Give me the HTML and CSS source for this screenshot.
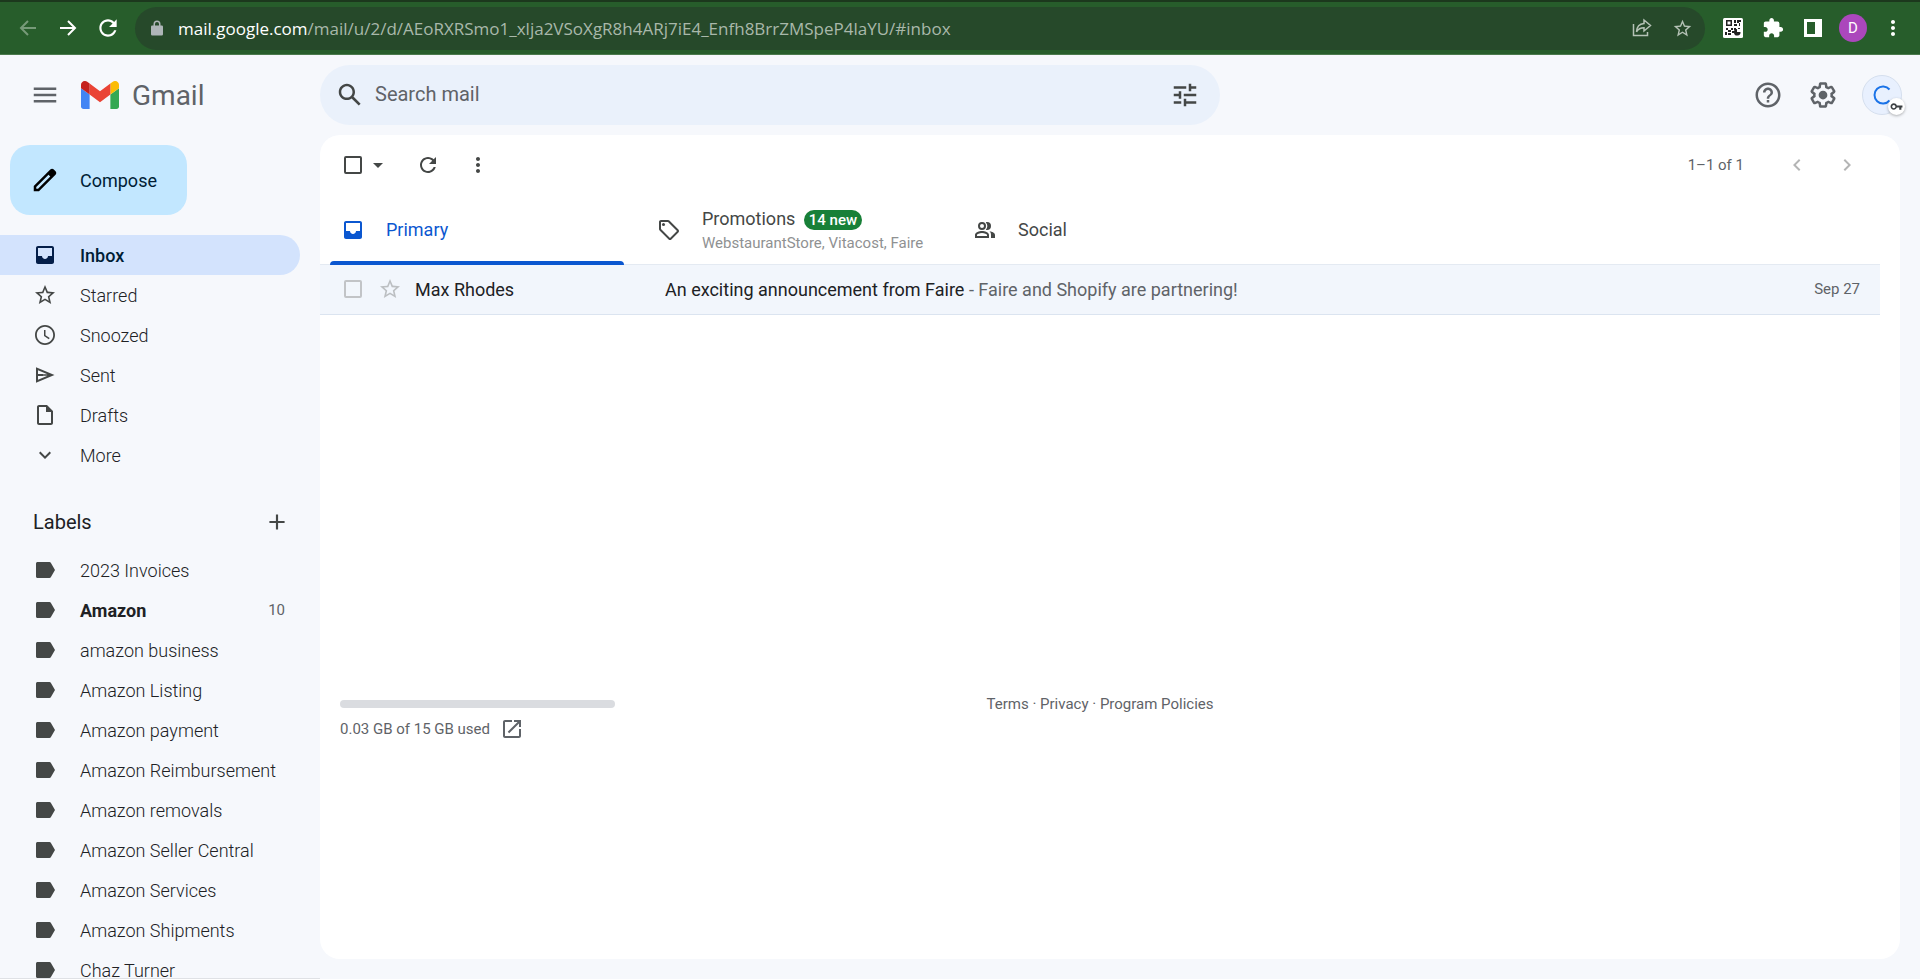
FILE: index.html
```html
<!DOCTYPE html>
<html lang="en">

<head>
  <meta charset="UTF-8">
  <meta name="viewport" content="width=device-width, initial-scale=1">
  <title>Inbox - Gmail</title>
  <link rel="stylesheet" href="styles.css">
</head>

<body>
  <!-- shared icons -->
  <svg class="sprite" aria-hidden="true">
    <symbol id="i-inbox" viewBox="0 0 24 24"><path d="M19 3H5c-1.100 0-2 .9-2 2v14c0 1.100.9 2 2 2h14c1.100 0 2-.9 2-2V5c0-1.100-.9-2-2-2zm0 10h-4c0 1.660-1.350 3-3 3s-3-1.340-3-3H5V5h14v8z"/></symbol>
    <symbol id="i-star" viewBox="0 0 24 24"><path d="M22 9.240l-7.190-.62L12 2 9.190 8.630 2 9.240l5.460 4.730L5.820 21 12 17.270 18.180 21l-1.630-7.030L22 9.240zM12 15.400l-3.760 2.270 1-4.280-3.320-2.880 4.380-.38L12 6.100l1.710 4.040 4.380.38-3.320 2.880 1 4.280L12 15.400z"/></symbol>
    <symbol id="i-label" viewBox="0 0 24 24"><path d="M16.500 4H4.500C3.700 4 3 4.700 3 5.500v13c0 .8.7 1.500 1.500 1.500h12c.6 0 1-.3 1.300-.7L22 12l-4.200-7.300c-.3-.4-.7-.7-1.300-.7z"/></symbol>
    <symbol id="i-refresh" viewBox="0 0 24 24"><path d="M17.650 6.350C16.200 4.900 14.210 4 12 4c-4.420 0-7.990 3.580-7.990 8s3.570 8 7.990 8c3.730 0 6.840-2.550 7.730-6h-2.080c-.82 2.330-3.040 4-5.650 4-3.310 0-6-2.690-6-6s2.690-6 6-6c1.660 0 3.140.69 4.220 1.780L13 11h7V4l-2.350 2.350z"/></symbol>
    <symbol id="i-dots" viewBox="0 0 24 24"><path d="M12 8c1.100 0 2-.9 2-2s-.9-2-2-2-2 .9-2 2 .9 2 2 2zm0 2c-1.100 0-2 .9-2 2s.9 2 2 2 2-.9 2-2-.9-2-2-2zm0 6c-1.100 0-2 .9-2 2s.9 2 2 2 2-.9 2-2-.9-2-2-2z"/></symbol>
  </svg>

  <div class="browser-bar">
    <button class="icon-btn faded" aria-label="Back"><svg width="20" height="20" viewBox="0 0 20 20"><path class="line" d="M18 10H3M10 3l-7 7 7 7"/></svg></button>
    <button class="icon-btn" aria-label="Forward"><svg width="20" height="20" viewBox="0 0 20 20"><path class="line" d="M2 10h15M10 3l7 7-7 7"/></svg></button>
    <button class="icon-btn" aria-label="Reload"><svg width="26" height="26"><use href="#i-refresh"/></svg></button>
    <div class="address-bar">
      <svg class="lock" width="12" height="16" viewBox="0 0 12 16"><path d="M1.500 5.500H2.500V4a3.500 3.500 0 0 1 7 0v1.500h1A1.300 1.300 0 0 1 12 6.800v7.400a1.300 1.300 0 0 1-1.300 1.300H1.300A1.300 1.300 0 0 1 0 14.200V6.800A1.300 1.300 0 0 1 1.500 5.500zM4 5.500h4V4a2 2 0 0 0-4 0z"/></svg>
      <div class="url"><span>mail.google.com</span>/mail/u/2/d/AEoRXRSmo1_xlja2VSoXgR8h4ARj7iE4_Enfh8BrrZMSpeP4laYU/#inbox</div>
      <button class="icon-btn" aria-label="Share"><svg width="20" height="20" viewBox="0 0 20 20"><path class="thin" d="M1.500 6v11.500h14V14M12 2l6.500 5.500L12 13v-3.200c-3.500 0-5.800 1.200-7.500 4 .3-4.700 3-8 7.500-8.300z"/></svg></button>
      <button class="icon-btn" aria-label="Bookmark"><svg width="21" height="21"><use href="#i-star"/></svg></button>
    </div>
    <button class="icon-btn" aria-label="QR code">
      <svg width="20" height="20" viewBox="0 0 20 20"><rect width="20" height="20" rx="1.500"/><g class="qr"><path d="M3 2h6v6H3zM4.500 3.500v3h3v-3zM11 2h2v3h-2zM14 2h4v2h-2v1h-2zM16 5h1v3h-1zM11 6h3v2h-3zM3 10h2v2H3zM5 12h3v2H5zM8 10h2v2H8zM2 14h2v3H2zM5 15h3v2H5zM11 10h2v2h-2zM15 10h2v1h-2zM9 13h2v2H9z" fill-rule="evenodd"/><path d="M14 11v3h3.500a3.300 3.300 0 1 1-3.500-3z"/></g></svg>
    </button>
    <button class="icon-btn" aria-label="Extensions"><svg width="22" height="22" viewBox="0 0 24 24"><path d="M20.500 11H19V7c0-1.100-.9-2-2-2h-4V3.500C13 2.120 11.880 1 10.500 1S8 2.120 8 3.500V5H4c-1.100 0-1.990.9-1.990 2v3.800H3.500c1.490 0 2.700 1.210 2.700 2.700s-1.210 2.700-2.700 2.700H2V20c0 1.100.9 2 2 2h3.800v-1.500c0-1.490 1.210-2.700 2.700-2.700s2.700 1.210 2.700 2.700V22H17c1.100 0 2-.9 2-2v-4h1.500c1.380 0 2.500-1.120 2.500-2.500S21.880 11 20.500 11z"/></svg></button>
    <button class="icon-btn" aria-label="Side panel"><svg width="18" height="18" viewBox="0 0 18 18"><path d="M0 0h18v18H0zM3 3v12h8V3z" fill-rule="evenodd"/></svg></button>
    <button class="profile" aria-label="Profile">D</button>
    <button class="icon-btn" aria-label="Browser menu"><svg width="24" height="24"><use href="#i-dots"/></svg></button>
  </div>

  <header class="header">
    <div class="brand">
      <button class="icon-btn" aria-label="Main menu"><svg width="30" height="30" viewBox="0 0 24 24"><path d="M3 18h18v-2H3v2zm0-5h18v-2H3v2zm0-7v2h18V6H3z"/></svg></button>
      <a class="logo" href="#">
        <svg width="38" height="28" viewBox="52 42 88 66" preserveAspectRatio="none">
          <path fill="#4285f4" d="M58 108h14V74L52 59v43c0 3.320 2.690 6 6 6"/>
          <path fill="#34a853" d="M120 108h14c3.320 0 6-2.690 6-6V59l-20 15"/>
          <path fill="#fbbc04" d="M120 48v26l20-15v-8c0-7.420-8.470-11.650-14.400-7.200"/>
          <path fill="#ea4335" d="M72 74V48l24 18 24-18v26L96 92"/>
          <path fill="#c5221f" d="M52 51v8l20 15V48l-5.600-4.200c-5.940-4.450-14.400-.22-14.400 7.200"/>
        </svg>
        <span>Gmail</span>
      </a>
    </div>
    <form class="search">
      <button type="button" class="icon-btn" aria-label="Search"><svg width="30" height="30" viewBox="0 0 24 24"><path d="M20.490 19l-5.730-5.730C15.530 12.200 16 10.910 16 9.500 16 5.910 13.090 3 9.500 3S3 5.910 3 9.500 5.910 16 9.500 16c1.410 0 2.700-.47 3.770-1.240L19 20.490 20.490 19zM5 9.500C5 7.010 7.010 5 9.500 5S14 7.010 14 9.500 11.990 14 9.500 14 5 11.990 5 9.500z"/></svg></button>
      <input type="text" placeholder="Search mail" aria-label="Search mail">
      <button type="button" class="icon-btn" aria-label="Search options"><svg width="30" height="30" viewBox="0 0 24 24"><path d="M3 17v2h6v-2H3zM3 5v2h10V5H3zm10 16v-2h8v-2h-8v-2h-2v6h2zM7 9v2H3v2h4v2h2V9H7zm14 4v-2H11v2h10zm-6-4h2V7h4V5h-4V3h-2v6z"/></svg></button>
    </form>
    <div class="header-tools">
      <button class="icon-btn" aria-label="Support"><svg width="30" height="30" viewBox="0 0 24 24"><path d="M11 18h2v-2h-2v2zm1-16C6.480 2 2 6.480 2 12s4.480 10 10 10 10-4.480 10-10S17.520 2 12 2zm0 18c-4.410 0-8-3.590-8-8s3.590-8 8-8 8 3.590 8 8-3.590 8-8 8zm0-14c-2.210 0-4 1.790-4 4h2c0-1.100.9-2 2-2s2 .9 2 2c0 2-3 1.750-3 5h2c0-2.250 3-2.500 3-5 0-2.210-1.790-4-4-4z"/></svg></button>
      <button class="icon-btn" aria-label="Settings"><svg width="30" height="30" viewBox="0 0 24 24"><path d="M13.850 22.250h-3.700c-.74 0-1.360-.54-1.450-1.270l-.27-1.890c-.27-.14-.53-.29-.79-.46l-1.800.72c-.7.26-1.470-.03-1.810-.65L2.200 15.530c-.35-.66-.2-1.440.36-1.880l1.530-1.190c-.01-.15-.02-.3-.02-.46 0-.15.01-.31.02-.46l-1.520-1.190c-.59-.45-.74-1.260-.37-1.880l1.850-3.190c.34-.62 1.110-.9 1.790-.63l1.810.73c.26-.17.52-.32.78-.46l.27-1.910c.09-.7.710-1.250 1.440-1.250h3.700c.74 0 1.360.54 1.450 1.270l.27 1.890c.27.14.53.29.79.46l1.800-.72c.71-.26 1.480.03 1.820.65l1.840 3.180c.36.66.2 1.440-.36 1.880l-1.520 1.190c.01.15.02.3.02.46s-.01.31-.02.46l1.520 1.190c.56.45.72 1.230.37 1.860l-1.860 3.220c-.34.62-1.110.9-1.800.63l-1.800-.72c-.26.17-.52.32-.78.46l-.27 1.910c-.1.680-.72 1.220-1.460 1.220zm-3.230-2h2.760l.37-2.550.53-.22c.44-.18.88-.44 1.340-.78l.45-.34 2.380.96 1.380-2.400-2.030-1.580.07-.56c.03-.26.06-.51.06-.78s-.03-.53-.06-.78l-.07-.56 2.030-1.580-1.390-2.400-2.390.96-.45-.35c-.42-.32-.87-.58-1.330-.77l-.52-.22-.37-2.550h-2.760l-.37 2.550-.53.21c-.44.190-.88.440-1.340.790l-.45.330-2.380-.95-1.390 2.390 2.030 1.580-.07.560a7 7 0 0 0-.06.790c0 .260.020.530.060.780l.07.560-2.030 1.580 1.380 2.400 2.390-.96.450.35c.430.330.860.580 1.330.77l.53.22.38 2.550z"/><circle cx="12" cy="12" r="3.500"/></svg></button>
      <button class="avatar" aria-label="Account"><svg width="18" height="20" viewBox="0 0 18 20"><path d="M16.500 4.500A8.500 8.500 0 1 0 16.500 15.500"/></svg>
        <span class="key"><svg width="13" height="13" viewBox="0 0 24 24"><path d="M12.650 10C11.830 7.670 9.610 6 7 6c-3.310 0-6 2.690-6 6s2.690 6 6 6c2.610 0 4.830-1.670 5.650-4H17v4h4v-4h2v-4H12.650zM7 15c-1.650 0-3-1.350-3-3s1.350-3 3-3 3 1.350 3 3-1.350 3-3 3z"/></svg></span>
      </button>
    </div>
  </header>

  <div class="content">
    <nav class="sidebar">
      <button class="compose"><svg width="30" height="30" viewBox="0 0 24 24"><path d="M20.410 4.940l-1.350-1.350c-.78-.78-2.050-.78-2.830 0L3 16.820V21h4.180L20.410 7.770c.79-.78.790-2.050 0-2.830zM6.410 19.060L5 19v-1.360l9.820-9.820 1.410 1.410-9.820 9.830z"/></svg>Compose</button>

      <ul class="folders">
        <li class="active"><a href="#"><svg width="24" height="24"><use href="#i-inbox"/></svg>Inbox</a></li>
        <li><a href="#"><svg width="24" height="24"><use href="#i-star"/></svg>Starred</a></li>
        <li><a href="#"><svg width="24" height="24" viewBox="0 0 24 24"><path d="M11.990 2C6.470 2 2 6.480 2 12s4.470 10 9.990 10C17.520 22 22 17.520 22 12S17.520 2 11.990 2zM12 20.200c-4.530 0-8.200-3.670-8.200-8.200S7.470 3.800 12 3.800s8.200 3.670 8.200 8.200-3.670 8.200-8.200 8.200zM12.500 7H11v6l4.800 3.200.9-1.300-4.200-2.700z"/></svg>Snoozed</a></li>
        <li><a href="#"><svg width="24" height="24" viewBox="0 0 24 24"><path d="M3 4.200v15.600L21.500 12zm2 3l9.500 4H5zm0 5.600h9.500L5 16.800z" fill-rule="evenodd"/><path d="M5 11h5v2H5z"/></svg>Sent</a></li>
        <li><a href="#"><svg width="24" height="24" viewBox="0 0 24 24"><path d="M14 2H6c-1.100 0-2 .9-2 2v16c0 1.100.9 2 2 2h12c1.100 0 2-.9 2-2V8l-6-6zM6 20V4h7v5h5v11H6z"/></svg>Drafts</a></li>
        <li><a href="#"><svg width="24" height="24" viewBox="0 0 24 24"><path d="M16.590 8.590L12 13.170 7.410 8.590 6 10l6 6 6-6z"/></svg>More</a></li>
      </ul>

      <div class="labels-header">
        <h2>Labels</h2>
        <button class="icon-btn" aria-label="Create new label"><svg width="26" height="26" viewBox="0 0 24 24"><path d="M19 13h-6v6h-2v-6H5v-2h6V5h2v6h6z"/></svg></button>
      </div>

      <ul class="labels">
        <li><a href="#"><svg width="24" height="24"><use href="#i-label"/></svg>2023 Invoices</a></li>
        <li class="unread"><a href="#"><svg width="24" height="24"><use href="#i-label"/></svg>Amazon<span class="count">10</span></a></li>
        <li><a href="#"><svg width="24" height="24"><use href="#i-label"/></svg>amazon business</a></li>
        <li><a href="#"><svg width="24" height="24"><use href="#i-label"/></svg>Amazon Listing</a></li>
        <li><a href="#"><svg width="24" height="24"><use href="#i-label"/></svg>Amazon payment</a></li>
        <li><a href="#"><svg width="24" height="24"><use href="#i-label"/></svg>Amazon Reimbursement</a></li>
        <li><a href="#"><svg width="24" height="24"><use href="#i-label"/></svg>Amazon removals</a></li>
        <li><a href="#"><svg width="24" height="24"><use href="#i-label"/></svg>Amazon Seller Central</a></li>
        <li><a href="#"><svg width="24" height="24"><use href="#i-label"/></svg>Amazon Services</a></li>
        <li><a href="#"><svg width="24" height="24"><use href="#i-label"/></svg>Amazon Shipments</a></li>
        <li><a href="#"><svg width="24" height="24"><use href="#i-label"/></svg>Chaz Turner</a></li>
      </ul>
    </nav>

    <main class="mail">
      <div class="toolbar">
        <input type="checkbox" aria-label="Select all">
        <button class="icon-btn caret" aria-label="Select"><svg width="24" height="24" viewBox="0 0 24 24"><path d="M7 10l5 5 5-5z"/></svg></button>
        <button class="icon-btn" aria-label="Refresh"><svg width="24" height="24"><use href="#i-refresh"/></svg></button>
        <button class="icon-btn" aria-label="More"><svg width="24" height="24"><use href="#i-dots"/></svg></button>
        <span class="range">1–1 of 1</span>
        <button class="icon-btn pale" aria-label="Newer"><svg width="24" height="24" viewBox="0 0 24 24"><path d="M15.400 7.400L14 6l-6 6 6 6 1.400-1.400L10.800 12z"/></svg></button>
        <button class="icon-btn pale" aria-label="Older"><svg width="24" height="24" viewBox="0 0 24 24"><path d="M10 6L8.600 7.400l4.600 4.600-4.600 4.600L10 18l6-6z"/></svg></button>
      </div>

      <div class="tabs">
        <button class="tab selected"><svg width="24" height="24"><use href="#i-inbox"/></svg><span class="tab-name">Primary</span></button>
        <button class="tab"><svg width="24" height="24" viewBox="0 0 24 24"><path d="M21.400 11.600l-9-9C12.100 2.200 11.600 2 11 2H4c-1.100 0-2 .9-2 2v7c0 .6.2 1.100.6 1.400l9 9c.4.400.9.600 1.400.600s1-.2 1.400-.6l7-7c.4-.4.600-.9.600-1.400s-.2-1-.6-1.400zM13 20l-9-9V4h7l9 9-7 7z"/><circle cx="6.500" cy="6.500" r="1.500"/></svg>
          <span class="tab-text">
            <span class="tab-name">Promotions <span class="badge">14 new</span></span>
            <span class="senders">WebstaurantStore, Vitacost, Faire</span>
          </span>
        </button>
        <button class="tab"><svg width="24" height="24" viewBox="0 0 24 24"><path d="M9 4a4 4 0 1 0 0 8 4 4 0 0 0 0-8zm0 2a2 2 0 1 1 0 4 2 2 0 0 1 0-4zM9 13c-2.700 0-7 1.300-7 4v3h14v-3c0-2.700-4.300-4-7-4zm-5 5v-1c0-.8 2.500-2 5-2s5 1.200 5 2v1zM14 4c-.4 0-.8.1-1.200.2a6 6 0 0 1 0 7.600c.4.100.8.200 1.200.200a4 4 0 0 0 0-8zM16.500 13.300c1 .9 1.500 2.100 1.500 3.700v3h4v-3c0-2-2.700-3.300-5.500-3.700z"/></svg><span class="tab-name">Social</span></button>
      </div>

      <table class="messages">
        <tr>
          <td class="col-check"><input type="checkbox" aria-label="Select message"></td>
          <td class="col-star"><button class="icon-btn" aria-label="Star"><svg width="24" height="24"><use href="#i-star"/></svg></button></td>
          <td class="col-from">Max Rhodes</td>
          <td><a href="#">An exciting announcement from Faire<span> - Faire and Shopify are partnering!</span></a></td>
          <td class="col-date">Sep 27</td>
        </tr>
      </table>

      <footer class="footer">
        <div class="storage">
          <div class="storage-bar"></div>
          <div class="storage-text">0.03 GB of 15 GB used
            <a href="#" aria-label="Manage storage"><svg width="24" height="24" viewBox="0 0 24 24"><path d="M19 19H5V5h7V3H5c-1.100 0-2 .9-2 2v14c0 1.100.9 2 2 2h14c1.100 0 2-.9 2-2v-7h-2v7zM14 3v2h3.590l-9.830 9.830 1.410 1.410L19 6.410V10h2V3h-7z"/></svg></a>
          </div>
        </div>
        <div class="links"><a href="#">Terms</a> · <a href="#">Privacy</a> · <a href="#">Program Policies</a></div>
      </footer>
    </main>
  </div>
</body>

</html>
```
FILE: styles.css
```css
* {
  box-sizing: border-box;
}

body {
  display: flex;
  flex-direction: column;
  height: 100vh;
  margin: 0;
  overflow: hidden;
  background-color: #f6f8fc;
  color: #202124;
  font-family: Roboto, Arial, sans-serif;
  font-size: 18px;
}

button,
input {
  font-family: inherit;
  font-size: inherit;
  color: inherit;
}

button {
  padding: 0;
  border: none;
  background: none;
  cursor: pointer;
}

a {
  color: inherit;
  text-decoration: none;
}

ul {
  list-style-type: none;
  margin: 0;
  padding: 0;
}

svg {
  fill: currentColor;
  flex-shrink: 0;
}

.sprite {
  position: absolute;
  width: 0;
  height: 0;
}

.icon-btn {
  display: flex;
  align-items: center;
  justify-content: center;
  width: 40px;
  height: 40px;
  flex-shrink: 0;
}

input[type="checkbox"] {
  appearance: none;
  display: block;
  width: 18px;
  height: 18px;
  margin: 0;
  border: 2px solid #444746;
  border-radius: 2px;
}

/* browser bar */
.browser-bar {
  display: flex;
  align-items: center;
  height: 55px;
  flex-shrink: 0;
  padding: 0 7px 0 8px;
  border-top: 2px solid #1c381d;
  border-bottom: 1px solid #4b7a4d;
  background-color: #275d2b;
  color: #fff;
}

.browser-bar .faded {
  color: #779a79;
}

.line,
.thin {
  fill: none;
  stroke: currentColor;
  stroke-width: 2;
}

.thin {
  stroke-width: 1.5;
}

.address-bar {
  display: flex;
  align-items: center;
  flex: 1;
  min-width: 0;
  height: 43px;
  margin: 0 8px 0 7px;
  padding: 0 3px 0 16px;
  border-radius: 22px;
  background-color: #26492a;
  color: #b5c2b6;
}

.lock {
  color: #aeb5b8;
}

.url {
  flex: 1;
  min-width: 0;
  margin-left: 15px;
  overflow: hidden;
  white-space: nowrap;
  font-family: "Open Sans", sans-serif;
  font-size: 17px;
  color: #a9b8aa;
}

.url span {
  color: #fff;
}

.qr {
  fill: #222;
}

.profile {
  width: 28px;
  height: 28px;
  margin: 0 6px;
  border-radius: 50%;
  background-color: #ab47bc;
  font-size: 15px;
}

/* header */
.header {
  display: flex;
  align-items: center;
  height: 80px;
  flex-shrink: 0;
  color: #5f6368;
}

.brand {
  display: flex;
  align-items: center;
  width: 320px;
  flex-shrink: 0;
  padding-left: 25px;
}

.logo {
  display: flex;
  align-items: center;
  gap: 13px;
  margin-left: 16px;
  font-size: 28px;
}

.search {
  display: flex;
  align-items: center;
  flex: 0 1 900px;
  height: 60px;
  padding: 0 15px 0 10px;
  border-radius: 30px;
  background-color: #eaf1fb;
  color: #444746;
}

.search input {
  flex: 1;
  min-width: 0;
  padding: 0 5px 2px;
  border: none;
  outline: none;
  background: none;
  font-size: 20px;
}

.search input::placeholder {
  color: #5f6368;
  opacity: 1;
}

.header-tools {
  display: flex;
  align-items: center;
  gap: 15px;
  margin-left: auto;
  padding-right: 18px;
}

.avatar {
  position: relative;
  display: flex;
  align-items: center;
  justify-content: center;
  width: 40px;
  height: 40px;
  margin-left: 4px;
  border: 1px solid #d5dfee;
  border-radius: 50%;
  background-color: #e8f0fe;
}

.avatar > svg {
  fill: none;
  stroke: #1a73e8;
  stroke-width: 2;
}

.key {
  position: absolute;
  right: -4px;
  bottom: -1px;
  display: flex;
  align-items: center;
  justify-content: center;
  width: 17px;
  height: 17px;
  border-radius: 50%;
  background-color: #fff;
  box-shadow: 0 1px 3px rgba(0, 0, 0, 0.3);
  color: #3c4043;
}

/* sidebar */
.content {
  display: flex;
  flex: 1;
  min-height: 0;
}

.sidebar {
  width: 320px;
  flex-shrink: 0;
  overflow: hidden;
  padding-top: 10px;
  border-bottom: 1px solid #dfe1e5;
  color: #202124;
}

.compose {
  display: flex;
  align-items: center;
  gap: 20px;
  height: 70px;
  margin: 0 0 20px 10px;
  padding: 0 30px 0 20px;
  border-radius: 20px;
  background-color: #c2e7ff;
  color: #001d35;
}

.compose svg {
  color: #000;
}

.folders a,
.labels a {
  display: flex;
  align-items: center;
  gap: 23px;
  height: 40px;
  margin-right: 20px;
  padding: 0 15px 0 33px;
  border-radius: 0 20px 20px 0;
  font-weight: 300;
}

.folders svg,
.labels svg {
  color: #444746;
}

.folders .active a {
  background-color: #d3e3fd;
  color: #001d35;
  font-weight: 500;
}

.folders .active svg {
  color: #041e49;
}

.labels-header {
  display: flex;
  align-items: center;
  justify-content: space-between;
  height: 75px;
  padding: 19px 23px 0 33px;
}

.labels-header h2 {
  margin: 0;
  font-size: 20px;
  font-weight: normal;
}

.labels-header .icon-btn {
  color: #444746;
}

.labels .unread a {
  font-weight: bold;
}

.count {
  margin-left: auto;
  font-size: 15px;
  font-weight: normal;
  color: #5f6368;
}

/* mail list */
.mail {
  flex: 1;
  min-width: 0;
  margin: 0 20px 20px 0;
  overflow: hidden;
  border-radius: 20px;
  background-color: #fff;
}

.toolbar {
  display: flex;
  align-items: center;
  height: 60px;
  padding: 0 28px 0 24px;
  color: #444746;
}

.toolbar .icon-btn {
  width: 50px;
}

.toolbar .caret {
  width: 32px;
  margin-right: 9px;
}

.toolbar .pale {
  color: #b4b5b5;
}

.range {
  margin-left: auto;
  margin-right: 28px;
  font-size: 15px;
  color: #5f6368;
}

.tabs {
  display: flex;
  height: 70px;
  margin-right: 20px;
  border-bottom: 1px solid #e4eaf2;
}

.tab {
  position: relative;
  display: flex;
  align-items: center;
  gap: 21px;
  width: 316px;
  padding-left: 21px;
  color: #444746;
  text-align: left;
}

.tab-text {
  display: flex;
  flex-direction: column;
  gap: 4px;
}

.badge {
  display: inline-block;
  margin-left: 4px;
  padding: 0 5px;
  border-radius: 10px;
  background-color: #188038;
  color: #fff;
  font-size: 15px;
  font-weight: 500;
  line-height: 20px;
}

.senders {
  font-size: 15px;
  color: #8f9192;
}

.selected {
  color: #0b57d0;
}

.selected::after {
  content: "";
  position: absolute;
  left: 10px;
  right: 12px;
  bottom: -1px;
  height: 4px;
  border-radius: 4px 4px 0 0;
  background-color: #0b57d0;
}

.messages {
  width: calc(100% - 20px);
  border-collapse: collapse;
  table-layout: fixed;
  background-color: #f2f6fc;
}

.messages td {
  height: 49px;
  padding: 0;
  border-bottom: 1px solid #dbe4f0;
  overflow: hidden;
  white-space: nowrap;
}

.messages .col-check {
  width: 50px;
  padding-left: 24px;
}

.messages .col-star {
  width: 45px;
}

.messages .col-from {
  width: 250px;
}

.messages .col-date {
  width: 100px;
  padding-right: 20px;
  text-align: right;
  font-size: 15px;
  color: #5f6368;
}

.messages input {
  border-color: #c2c4c7;
}

.messages .icon-btn {
  color: #bcbfc2;
}

.messages a span {
  color: #5f6368;
}

/* footer */
.footer {
  display: grid;
  grid-template-columns: 1fr auto 1fr;
  margin-top: 385px;
  padding: 0 40px 0 20px;
  font-size: 15px;
  color: #5f6368;
}

.storage-bar {
  width: 275px;
  height: 8px;
  border-radius: 4px;
  background-color: #dadce0;
}

.storage-text {
  display: flex;
  align-items: center;
  gap: 10px;
  height: 42px;
}

.storage-text svg {
  display: block;
}

.links {
  line-height: 8px;
}
```
